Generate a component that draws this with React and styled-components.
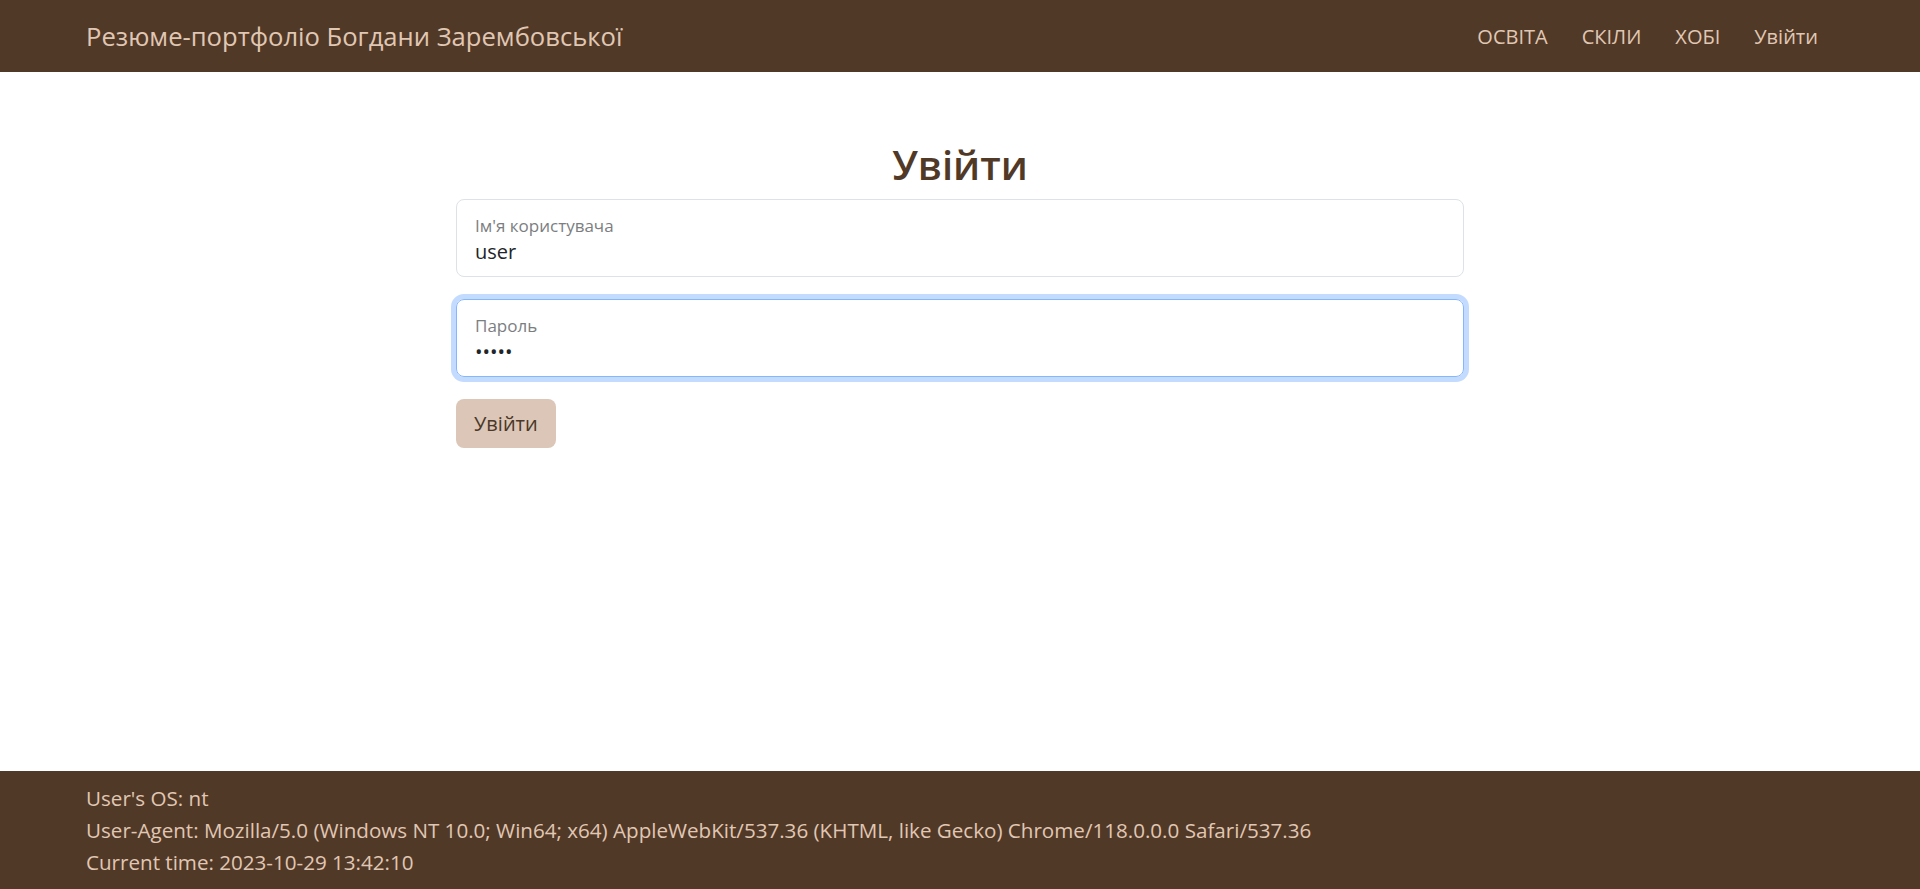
import styled, { createGlobalStyle } from "styled-components";

const GlobalStyle = createGlobalStyle`
    * {
        box-sizing: border-box;
    }

    body {
        margin: 0;
        font-family: "Segoe UI", "Open Sans", "Noto Sans", sans-serif;
        color: #212529;
        background: #fff;
    }
`;

const links = ["ОСВІТА", "СКІЛИ", "ХОБІ", "Увійти"];

const info = [
    "User's OS: nt",
    "User-Agent: Mozilla/5.0 (Windows NT 10.0; Win64; x64) AppleWebKit/537.36 (KHTML, like Gecko) Chrome/118.0.0.0 Safari/537.36",
    "Current time: 2023-10-29 13:42:10",
];

export default function App() {
    return (
        <>
            <GlobalStyle />
            <Page>
                <Header>
                    <Brand href="#">Резюме-портфоліо Богдани Зарембовської</Brand>
                    <Nav>
                        {links.map((l) => (
                            <NavLink key={l} href="#">{l}</NavLink>
                        ))}
                    </Nav>
                </Header>

                <Main>
                    <Form onSubmit={(e) => e.preventDefault()}>
                        <Title>Увійти</Title>

                        <Field>
                            <Label>Ім'я користувача</Label>
                            <Input type="text" defaultValue="user" />
                        </Field>

                        <Field focused>
                            <Label>Пароль</Label>
                            <Input type="password" defaultValue="12345" />
                        </Field>

                        <Button type="submit">Увійти</Button>
                    </Form>
                </Main>

                <Footer>
                    {info.map((line) => (
                        <FooterLine key={line}>{line}</FooterLine>
                    ))}
                </Footer>
            </Page>
        </>
    );
}

const Page = styled.div`
    min-height: 100vh;
    display: flex;
    flex-direction: column;
`;

const Header = styled.header`
    height: 72px;
    background-color: #513927;
    display: flex;
    align-items: center;
    justify-content: space-between;
    padding: 0 85px 0 86px;
`;

const Brand = styled.a`
    font-size: 25.6px;
    color: #e0c7b4;
    text-decoration: none;
`;

const Nav = styled.nav`
    display: flex;
    align-items: center;
`;

const NavLink = styled.a`
    font-size: 20px;
    color: #e0c7b4;
    text-decoration: none;
    padding: 0 17px;
`;

const Main = styled.main`
    flex: 1;
    padding-top: 69px;
`;

const Form = styled.form`
    width: 1008px;
    margin: 0 auto;
    display: flex;
    flex-direction: column;
    align-items: flex-start;
`;

const Title = styled.h1`
    align-self: center;
    margin: 0 0 10px;
    font-size: 40px;
    line-height: 48px;
    font-weight: 600;
    color: #513927;
`;

const Field = styled.div`
    width: 100%;
    height: 78px;
    margin-bottom: 22px;
    padding: 14px 18px 0;
    display: flex;
    flex-direction: column;
    border: 1px solid ${(p) => (p.focused ? "#86b7fe" : "#dee2e6")};
    border-radius: 8px;
    box-shadow: ${(p) => (p.focused ? "0 0 0 5px rgba(13, 110, 253, 0.25)" : "none")};
`;

const Label = styled.label`
    font-size: 17px;
    line-height: 24px;
    color: #7b7e81;
`;

const Input = styled.input`
    border: none;
    outline: none;
    padding: 0;
    background: transparent;
    font-family: inherit;
    font-size: 20px;
    line-height: 28px;
    color: #212529;
`;

const Button = styled.button`
    height: 49px;
    padding: 0 18px;
    border: none;
    border-radius: 8px;
    background-color: #dbc6b7;
    color: #4a3829;
    font-family: inherit;
    font-size: 20px;
    cursor: pointer;
`;

const Footer = styled.footer`
    background-color: #513927;
    padding: 11px 86px;
`;

const FooterLine = styled.p`
    margin: 0;
    font-size: 20.6px;
    line-height: 32px;
    color: #e0c7b4;
`;
